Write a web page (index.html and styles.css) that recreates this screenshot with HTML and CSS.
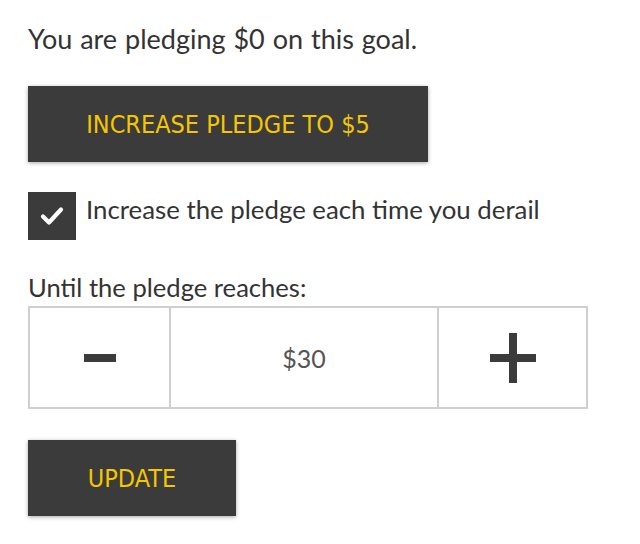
FILE: index.html
```html
<!DOCTYPE html>
<html>
<head>
<meta charset="utf-8">
<link rel="stylesheet" href="styles.css">
</head>
<body>
<div class="panel">
  <p class="status">You are pledging $0 on this goal.</p>
  <button class="btn btn-wide">INCREASE PLEDGE TO $5</button>
  <label class="check-row">
    <span class="checkbox">
      <svg width="26" height="24" viewBox="0 0 26 24"><path d="M4 12.5 L10 18.5 L22 5.5" fill="none" stroke="#fff" stroke-width="4.2" stroke-linecap="round" stroke-linejoin="round"/></svg>
    </span>
    <span class="check-label">Increase the pledge each time you derail</span>
  </label>
  <p class="until">Until the pledge reaches:</p>
  <div class="stepper">
    <div class="step-btn minus"><span class="bar-h"></span></div>
    <div class="step-value">$30</div>
    <div class="step-btn plus"><span class="bar-h"></span><span class="bar-v"></span></div>
  </div>
  <button class="btn btn-update">UPDATE</button>
</div>
</body>
</html>
```
FILE: styles.css
```css
html, body { margin: 0; padding: 0; background: #fff; }
body { font-family: "Lato", "Noto Sans", sans-serif; color: #333; }
.panel { padding: 22px 28px; display: flex; flex-direction: column; align-items: flex-start; }
.status { margin: 0; font-size: 27px; line-height: 34px; word-spacing: 1px; color: #333; }
.btn {
  background: #3b3b3b; color: #f6c600; border: none;
  font-family: "DejaVu Sans Condensed", "DejaVu Sans", sans-serif;
  font-size: 25px; height: 76px;
  box-shadow: 0 1px 4px rgba(0,0,0,0.35);
  padding: 0;
}
.btn-wide { width: 400px; margin-top: 30px; }
.check-row { display: flex; align-items: flex-start; margin-top: 30px; gap: 10px; }
.checkbox { width: 48px; height: 48px; background: #3b3b3b; display: flex; align-items: center; justify-content: center; }
.check-label { font-size: 25.8px; line-height: 34px; color: #333; }
.until { margin: 30px 0 0; font-size: 25.6px; line-height: 34px; }
.stepper { display: grid; grid-template-columns: 139px 270px 147px; width: 560px; height: 103px; box-sizing: border-box; border: 2px solid #cfcfcf; margin-top: 2px; }
.step-btn, .step-value { display: flex; align-items: center; justify-content: center; position: relative; }
.step-value { border-left: 2px solid #cfcfcf; border-right: 2px solid #cfcfcf; font-size: 25px; color: #555; }
.bar-h { position: absolute; width: 32px; height: 8px; background: #3b3b3b; left: 50%; top: 50%; transform: translate(-50%, -50%); }
.plus .bar-h { width: 46px; }
.bar-v { position: absolute; width: 8px; height: 50px; background: #3b3b3b; left: 50%; top: 50%; transform: translate(-50%, -50%); }
.btn-update { width: 208px; margin-top: 31px; }
```
